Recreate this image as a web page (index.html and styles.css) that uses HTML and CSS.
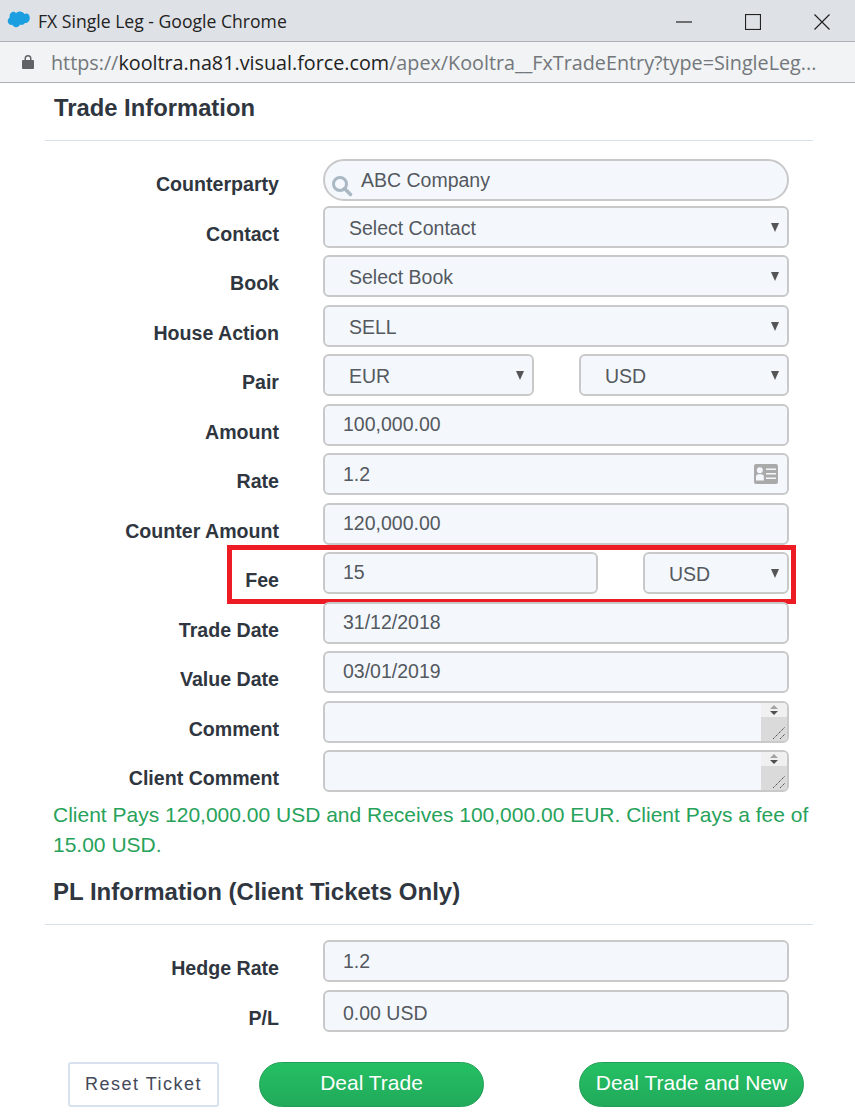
FILE: index.html
```html
<!DOCTYPE html>
<html lang="en">
<head>
<meta charset="utf-8">
<title>FX Single Leg - Google Chrome</title>
<link rel="stylesheet" href="styles.css">
</head>
<body>
<header class="titlebar">
  <svg class="logo" width="24" height="17" viewBox="0 0 24 17"><path fill="#1b9fe0" d="M10 2.200C11 1 12.400 .4 13.900 .4c2 0 3.700 1 4.500 2.600.7-.3 1.400-.5 2.100-.5 1.900 0 3.300 2 3.300 4.500S22 12 19.900 12c-.4 0-.7 0-1-.1-.7 1.300-2 2-3.300 2-.6 0-1.100-.1-1.600-.4-.6 1.500-2.100 2.700-3.800 2.700s-3.200-1-3.800-2.400c-.3.100-.6.100-.9.100-2.100 0-3.800-1.700-3.800-4 0-1.500.8-2.800 2-3.500C3.300 3 5.200 .8 7.400 .8c1 0 1.900.5 2.600 1.400z"/></svg>
  <span class="wintitle">FX Single Leg - Google Chrome</span>
  <div class="winbtns">
    <svg width="16" height="16" viewBox="0 0 16 16"><path d="M0 8h16" stroke="#222" stroke-width="1.200"/></svg>
    <svg width="16" height="16" viewBox="0 0 16 16"><rect x=".5" y=".5" width="15" height="15" fill="none" stroke="#222" stroke-width="1.200"/></svg>
    <svg width="16" height="16" viewBox="0 0 16 16"><path d="M.5.500l15 15M15.500.500l-15 15" stroke="#222" stroke-width="1.200"/></svg>
  </div>
</header>
<div class="addressbar">
  <svg width="12" height="16" viewBox="0 0 12 16"><path fill="#5f6368" d="M2.500 6V4.500a3.500 3.500 0 0 1 7 0V6H11a1 1 0 0 1 1 1v7a1 1 0 0 1-1 1H1a1 1 0 0 1-1-1V7a1 1 0 0 1 1-1zm1.500 0h4V4.500a2 2 0 0 0-4 0z"/></svg>
  <span class="url"><span class="url-dim">https://</span>kooltra.na81.visual.force.com<span class="url-dim">/apex/Kooltra__FxTradeEntry?type=SingleLeg...</span></span>
</div>
<main class="page">
  <h2 class="section-title">Trade Information</h2>
  <div class="form">
    <div class="row row-first">
      <label class="label">Counterparty</label>
      <div class="field search">
        <svg class="search-icon" width="22" height="22" viewBox="0 0 22 22"><circle cx="9" cy="9" r="6.500" fill="none" stroke="#a9b8c3" stroke-width="3"/><path d="M13.500 13.500l6 6" stroke="#a9b8c3" stroke-width="3.500" stroke-linecap="round"/></svg>
        <span>ABC Company</span>
      </div>
    </div>
    <div class="row"><label class="label">Contact</label><div class="field select">Select Contact</div></div>
    <div class="row"><label class="label">Book</label><div class="field select">Select Book</div></div>
    <div class="row"><label class="label">House Action</label><div class="field select">SELL</div></div>
    <div class="row">
      <label class="label">Pair</label>
      <div class="pair"><div class="field select w-pair">EUR</div><div class="field select w-pair2">USD</div></div>
    </div>
    <div class="row"><label class="label">Amount</label><div class="field">100,000.00</div></div>
    <div class="row">
      <label class="label">Rate</label>
      <div class="field rate">1.2
        <svg width="24" height="20" viewBox="0 0 24 20"><path fill-rule="evenodd" fill="#aaa" d="M2 0h20a2 2 0 0 1 2 2v16a2 2 0 0 1-2 2H2a2 2 0 0 1-2-2V2a2 2 0 0 1 2-2zm3.800 3.200a3 3 0 1 0 0 6 3 3 0 0 0 0-6zM2 16.500h7.800v-4c0-1.300-1-2.300-2.300-2.300H4.300C3 10.200 2 11.200 2 12.500zM12 4.500v1.600h10V4.500zm0 4.500v1.600h10V9zm0 4.500v1.600h10v-1.600z"/></svg>
      </div>
    </div>
    <div class="row"><label class="label">Counter Amount</label><div class="field">120,000.00</div></div>
    <div class="row row-highlight">
      <label class="label">Fee</label>
      <div class="pair"><div class="field w-fee">15</div><div class="field select w-cur">USD</div></div>
    </div>
    <div class="row"><label class="label">Trade Date</label><div class="field">31/12/2018</div></div>
    <div class="row"><label class="label">Value Date</label><div class="field">03/01/2019</div></div>
    <div class="row">
      <label class="label">Comment</label>
      <div class="field area"><div class="scroller"><div class="spin"><i class="up"></i><i class="down"></i></div><div class="grip"><svg width="14" height="14" viewBox="0 0 14 14"><path d="M1 13L13 1M8 13l5-5" stroke="#555" stroke-width="1" stroke-dasharray="1.500 .6"/></svg></div></div></div>
    </div>
    <div class="row">
      <label class="label">Client Comment</label>
      <div class="field area"><div class="scroller"><div class="spin"><i class="up"></i><i class="down"></i></div><div class="grip"><svg width="14" height="14" viewBox="0 0 14 14"><path d="M1 13L13 1M8 13l5-5" stroke="#555" stroke-width="1" stroke-dasharray="1.500 .6"/></svg></div></div></div>
    </div>
  </div>
  <p class="message">Client Pays 120,000.00 USD and Receives 100,000.00 EUR. Client Pays a fee of 15.00 USD.</p>
  <h2 class="section-title section-title-pl">PL Information (Client Tickets Only)</h2>
  <div class="form form-pl">
    <div class="row row-pl"><label class="label">Hedge Rate</label><div class="field field-hedge">1.2</div></div>
    <div class="row row-pl"><label class="label">P/L</label><div class="field field-pl">0.00 USD</div></div>
  </div>
  <div class="actions">
    <button class="btn-reset">Reset Ticket</button>
    <button class="btn-deal">Deal Trade</button>
    <button class="btn-deal btn-new">Deal Trade and New</button>
  </div>
</main>
</body>
</html>
```
FILE: styles.css
```css
*, *::before, *::after { box-sizing: border-box; }
html, body { margin: 0; padding: 0; }
body {
  width: 855px;
  height: 1117px;
  overflow: hidden;
  background: #fff;
  font-family: "Liberation Sans", Arial, sans-serif;
  color: #2f3640;
}
.titlebar {
  height: 42px;
  background: #dee1e6;
  border-bottom: 1px solid #aeb0b3;
  display: flex;
  align-items: center;
  padding: 0 25px 0 6px;
}
.logo { margin-right: 8px; margin-top: -3px; }
.wintitle {
  font-family: "Open Sans", sans-serif;
  font-size: 17.6px;
  color: #222;
  margin-top: 0;
}
.winbtns {
  margin-left: auto;
  display: flex;
  gap: 53px;
  margin-top: 3px;
}
.addressbar {
  height: 41px;
  background: #f1f3f4;
  border-bottom: 1px solid #aeb0b3;
  display: flex;
  align-items: center;
  padding: 0 0 0 22px;
  gap: 17px;
}
.url {
  font-family: "Open Sans", sans-serif;
  font-size: 19.75px;
  color: #222;
  white-space: nowrap;
}
.url-dim { color: #73777b; }
.page { padding: 0 42px 0 45px; }
.section-title {
  margin: 0;
  height: 58px;
  padding: 11px 0 0 9px;
  font-size: 23.8px;
  line-height: 28px;
  font-weight: 700;
  color: #2f3640;
  border-bottom: 1px solid #d8e2ee;
}
.form { padding-top: 18px; }
.row {
  display: grid;
  grid-template-columns: 234px 466px;
  column-gap: 44px;
  height: 49.5px;
  align-items: start;
  position: relative;
}
.row-first { height: 46.9px; }
.label {
  text-align: right;
  font-size: 19.6px;
  line-height: 24px;
  font-weight: 700;
  padding-top: 16px;
  color: #2f3640;
}
.row-first .label { padding-top: 13px; }
.field {
  position: relative;
  height: 42px;
  width: 466px;
  background: #f4f8fd;
  border: 2px solid #c9c9c9;
  border-radius: 6px;
  padding: 0 18px;
  font-size: 19.5px;
  line-height: 37px;
  color: #54595f;
  white-space: nowrap;
}
.search {
  border-radius: 21px;
  padding-left: 36px;
  line-height: 39px;
  display: flex;
}
.search-icon { position: absolute; left: 6px; top: 14px; }
.select { padding-left: 24px; line-height: 41px; }
.select::after {
  content: "";
  position: absolute;
  right: 8px;
  top: 15px;
  border-left: 4.500px solid transparent;
  border-right: 4.500px solid transparent;
  border-top: 9px solid #555;
}
.pair { display: flex; justify-content: space-between; width: 466px; }
.w-pair { width: 211px; }
.w-pair2 { width: 210px; }
.w-fee { width: 275px; }
.w-cur { width: 146px; }
.rate { display: flex; justify-content: space-between; align-items: center; padding-right: 9px; line-height: 37px; }
.row-highlight::after {
  content: "";
  position: absolute;
  left: 182px;
  top: -7px;
  width: 569px;
  height: 59px;
  border: 5px solid #ed1c24;
  pointer-events: none;
}
.area {
  overflow: hidden;
  padding: 0;
  display: flex;
  justify-content: flex-end;
}
.scroller {
  width: 26px;
  display: flex;
  flex-direction: column;
}
.spin {
  height: 14px;
  background: #f0f0f0;
  display: flex;
  flex-direction: column;
  align-items: center;
  justify-content: center;
  gap: 2px;
}
.up, .down { width: 0; height: 0; border-left: 4px solid transparent; border-right: 4px solid transparent; }
.up { border-bottom: 4px solid #a3a3a3; }
.down { border-top: 4px solid #505050; }
.grip {
  flex: 1;
  background: #dadada;
  display: flex;
  align-items: flex-end;
  justify-content: flex-end;
  padding: 0 1px 1px 0;
  line-height: 0;
}
.message {
  margin: 0 0 0 8px;
  font-size: 21px;
  line-height: 30px;
  color: #27a25a;
  height: 61px;
  width: 770px;
}
.section-title-pl { padding: 17px 0 0 8px; height: 64px; font-size: 24px; }
.form-pl { padding-top: 15px; }
.row-pl { height: 50px; }
.field-hedge { line-height: 39px; }
.field-pl { line-height: 43px; }
.actions { display: flex; margin: 22px 0 0 23px; }
.btn-reset {
  width: 151px;
  height: 45px;
  background: #fff;
  border: 2px solid #d8e2ee;
  border-radius: 3px;
  font: 18px "Liberation Sans", Arial, sans-serif;
  letter-spacing: 1.500px;
  color: #44495a;
  padding: 1px 0 0;
}
.btn-deal {
  width: 225px;
  height: 45px;
  margin-left: 40px;
  background: linear-gradient(#25c063, #21aa5b);
  border: 1px solid #219e55;
  border-radius: 23px;
  color: #fff;
  font: 21px "Liberation Sans", Arial, sans-serif;
  padding: 0 0 3px;
}
.btn-new { margin-left: 95px; }
```
